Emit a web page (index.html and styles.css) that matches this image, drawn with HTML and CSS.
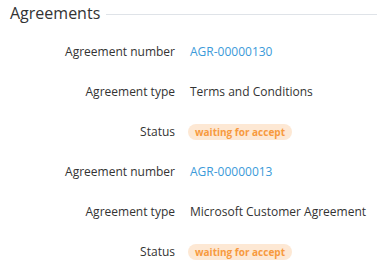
FILE: index.html
```html
<!DOCTYPE html>
<html lang="en">
<head>
    <meta charset="UTF-8">
    <title>Agreements</title>
    <link rel="stylesheet" href="styles.css">
</head>
<body>

<div class="section">
    <div class="section-title">
        <h2>Agreements</h2>
        <span class="rule"></span>
    </div>

    <!-- first agreement -->
    <div class="fields">
        <div class="label">Agreement number</div>
        <div class="value"><a href="#">AGR-00000130</a></div>

        <div class="label">Agreement type</div>
        <div class="value">Terms and Conditions</div>

        <div class="label">Status</div>
        <div class="value"><span class="badge">waiting for accept</span></div>
    </div>

    <!-- second agreement -->
    <div class="fields">
        <div class="label">Agreement number</div>
        <div class="value"><a href="#">AGR-00000013</a></div>

        <div class="label">Agreement type</div>
        <div class="value">Microsoft Customer Agreement</div>

        <div class="label">Status</div>
        <div class="value"><span class="badge">waiting for accept</span></div>
    </div>
</div>

</body>
</html>
```

FILE: styles.css
```css
body {
    margin: 0;
    font-family: "Open Sans", Arial, sans-serif;
    color: #333;
    background: #fff;
}
.section {
    padding: 0 0 0 10px;
}
.section-title {
    display: flex;
    align-items: center;
    height: 26px;
    margin-bottom: 5px;
}
.section-title h2 {
    margin: 0;
    font-size: 16px;
    font-weight: normal;
    color: #333;
}
.rule {
    flex: 1;
    height: 1px;
    margin: 2px 0 0 6px;
    background: #dfe3e8;
}
.fields {
    display: grid;
    grid-template-columns: 165px auto;
    grid-auto-rows: 40px;
    column-gap: 15px;
    align-items: center;
    font-size: 12px;
    white-space: nowrap;
}
.label {
    text-align: right;
}
.value a {
    color: #3b9ad9;
    text-decoration: none;
}
.badge {
    display: inline-block;
    margin-left: -2px;
    padding: 0 7px;
    height: 16px;
    line-height: 16px;
    border-radius: 8px;
    background: #fde8d4;
    color: #f79a3e;
    font-size: 10px;
    font-weight: bold;
}
```
